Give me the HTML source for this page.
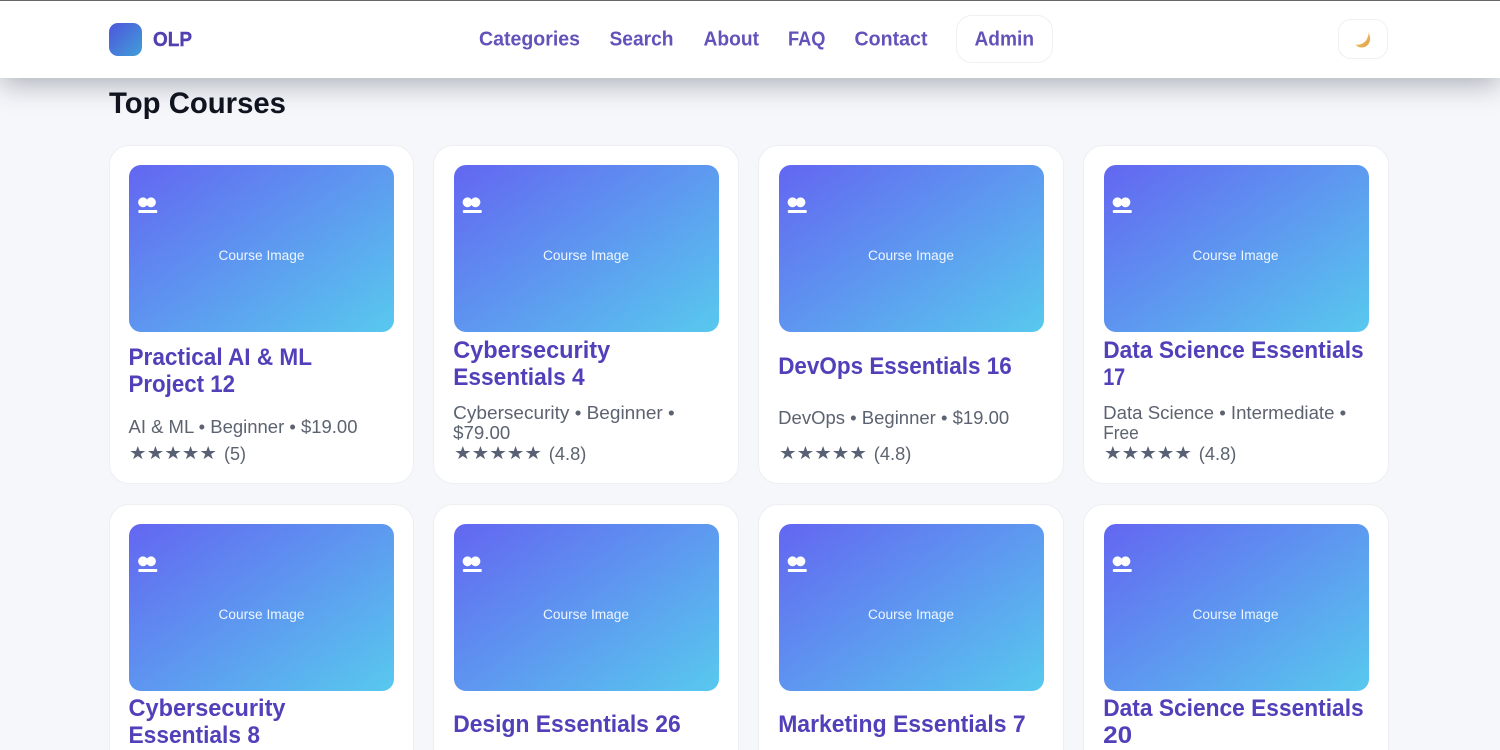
<!DOCTYPE html>
<html lang="en"><head><meta charset="utf-8"><title>OLP</title>
<style>
html,body{margin:0;padding:0;width:1500px;height:750px;overflow:hidden;background:#f5f7fb;font-family:"Liberation Sans",sans-serif}
#w{position:relative;width:1500px;height:750px;overflow:hidden;background:#f5f7fb}
.card{position:absolute;width:306px;height:339px;background:#fff;border:1px solid #edeff3;border-radius:20px;box-sizing:border-box}
.img{position:absolute;width:265px;height:167px;border-radius:12px;background:linear-gradient(145deg,#6366f1,#58c9ee)}
.hd{position:absolute;left:0;top:0;width:1500px;height:78px;background:#fff;border-top:1px solid #666;box-sizing:border-box;box-shadow:0 6px 28px rgba(40,44,60,.36)}
.logo{position:absolute;left:109px;top:23px;width:33px;height:33px;border-radius:9px;background:linear-gradient(135deg,#4f55dc,#3f9fd8)}
.btn{position:absolute;background:#fff;border:1px solid #eff0f4;box-sizing:border-box}
svg{position:absolute;left:0;top:0}
text{font-family:"Liberation Sans",sans-serif}
.t{font-size:24px;font-weight:700;fill:#5140b9}
.m{font-size:18px;fill:#5c6370}
.s{font-size:18px;fill:#586074;font-family:"DejaVu Sans",sans-serif}
.n{font-size:20px;font-weight:700;fill:#6252ba}
.c{font-size:13.500px;fill:#eef6ff}
</style></head><body><div id="w">
<div class="card" style="left:109px;top:145px;width:305px"></div>
<div class="card" style="left:433px;top:145px"></div>
<div class="card" style="left:758px;top:145px"></div>
<div class="card" style="left:1083px;top:145px"></div>
<div class="card" style="left:109px;top:504px;width:305px"></div>
<div class="card" style="left:433px;top:504px"></div>
<div class="card" style="left:758px;top:504px"></div>
<div class="card" style="left:1083px;top:504px"></div>
<div class="img" style="left:129px;top:165px"></div>
<div class="img" style="left:453.500px;top:165px"></div>
<div class="img" style="left:778.500px;top:165px"></div>
<div class="img" style="left:1103.500px;top:165px"></div>
<div class="img" style="left:129px;top:524px"></div>
<div class="img" style="left:453.500px;top:524px"></div>
<div class="img" style="left:778.500px;top:524px"></div>
<div class="img" style="left:1103.500px;top:524px"></div>
<div class="hd"></div>
<div class="logo"></div>
<div class="btn" style="left:956px;top:15px;width:97px;height:48px;border-radius:16px"></div>
<div class="btn" style="left:1338px;top:19px;width:50px;height:40px;border-radius:13px"></div>
<svg width="1500" height="750" viewBox="0 0 1500 750">
<defs><g id="ic" fill="#fff"><circle cx="5" cy="5.300" r="4.900"/><circle cx="13" cy="5.300" r="4.900"/><rect x="0.300" y="13" width="19" height="3" rx="1"/></g>
<linearGradient id="mo" x1="0" y1="0" x2="1" y2="1"><stop offset="0" stop-color="#f6d878"/><stop offset="1" stop-color="#dd9a44"/></linearGradient></defs>
<text x="153" y="46" font-size="20" font-weight="700" fill="#5140b0" stroke="#5140b0" stroke-width=".4" textLength="39" lengthAdjust="spacingAndGlyphs">OLP</text>
<text class="n" x="479" y="45.500" textLength="101" lengthAdjust="spacingAndGlyphs">Categories</text>
<text class="n" x="609.500" y="45.500" textLength="64" lengthAdjust="spacingAndGlyphs">Search</text>
<text class="n" x="703.500" y="45.500" textLength="55.500" lengthAdjust="spacingAndGlyphs">About</text>
<text class="n" x="788" y="45.500" textLength="37.500" lengthAdjust="spacingAndGlyphs">FAQ</text>
<text class="n" x="854.500" y="45.500" textLength="73" lengthAdjust="spacingAndGlyphs">Contact</text>
<text class="n" x="974.500" y="45.500" textLength="59.500" lengthAdjust="spacingAndGlyphs">Admin</text>
<path d="M1368.500 33 C1372 38 1370 47 1362 47.500 C1359 47.500 1357 46.500 1355.500 44.500 C1361 45.500 1368 42 1368.500 33Z" fill="url(#mo)"/>
<text x="109" y="113" font-size="30" font-weight="700" fill="#10141f" textLength="177" lengthAdjust="spacingAndGlyphs">Top Courses</text>

<use href="#ic" x="138" y="197"/><use href="#ic" x="462.500" y="197"/><use href="#ic" x="787.500" y="197"/><use href="#ic" x="1112.500" y="197"/>
<use href="#ic" x="138" y="556"/><use href="#ic" x="462.500" y="556"/><use href="#ic" x="787.500" y="556"/><use href="#ic" x="1112.500" y="556"/>

<text class="c" x="218.500" y="260" textLength="86" lengthAdjust="spacingAndGlyphs">Course Image</text>
<text class="c" x="543" y="260" textLength="86" lengthAdjust="spacingAndGlyphs">Course Image</text>
<text class="c" x="868" y="260" textLength="86" lengthAdjust="spacingAndGlyphs">Course Image</text>
<text class="c" x="1192.500" y="260" textLength="86" lengthAdjust="spacingAndGlyphs">Course Image</text>
<text class="c" x="218.500" y="619" textLength="86" lengthAdjust="spacingAndGlyphs">Course Image</text>
<text class="c" x="543" y="619" textLength="86" lengthAdjust="spacingAndGlyphs">Course Image</text>
<text class="c" x="868" y="619" textLength="86" lengthAdjust="spacingAndGlyphs">Course Image</text>
<text class="c" x="1192.500" y="619" textLength="86" lengthAdjust="spacingAndGlyphs">Course Image</text>

<text class="t" x="128.500" y="365" textLength="183.500" lengthAdjust="spacingAndGlyphs">Practical AI &amp; ML</text>
<text class="t" x="128.500" y="392" textLength="106.500" lengthAdjust="spacingAndGlyphs">Project 12</text>
<text class="m" x="128.500" y="433" textLength="229" lengthAdjust="spacingAndGlyphs">AI &amp; ML • Beginner • $19.00</text>
<text class="s" x="129" y="459" textLength="88" lengthAdjust="spacingAndGlyphs">★★★★★</text>
<text class="m" x="224" y="460" textLength="22" lengthAdjust="spacingAndGlyphs">(5)</text>

<text class="t" x="453.200" y="358" textLength="157" lengthAdjust="spacingAndGlyphs">Cybersecurity</text>
<text class="t" x="453.200" y="385" textLength="131.500" lengthAdjust="spacingAndGlyphs">Essentials 4</text>
<text class="m" x="453.200" y="419" textLength="221.500" lengthAdjust="spacingAndGlyphs">Cybersecurity • Beginner •</text>
<text class="m" x="453.200" y="439" textLength="57" lengthAdjust="spacingAndGlyphs">$79.00</text>
<text class="s" x="454" y="459" textLength="88" lengthAdjust="spacingAndGlyphs">★★★★★</text>
<text class="m" x="548.800" y="460" textLength="37.500" lengthAdjust="spacingAndGlyphs">(4.8)</text>

<text class="t" x="778.200" y="374" textLength="233.500" lengthAdjust="spacingAndGlyphs">DevOps Essentials 16</text>
<text class="m" x="778.200" y="424" textLength="231" lengthAdjust="spacingAndGlyphs">DevOps • Beginner • $19.00</text>
<text class="s" x="779" y="459" textLength="88" lengthAdjust="spacingAndGlyphs">★★★★★</text>
<text class="m" x="873.800" y="460" textLength="37.500" lengthAdjust="spacingAndGlyphs">(4.8)</text>

<text class="t" x="1103.200" y="358" textLength="260.500" lengthAdjust="spacingAndGlyphs">Data Science Essentials</text>
<text class="t" x="1103.200" y="385" textLength="22" lengthAdjust="spacingAndGlyphs">17</text>
<text class="m" x="1103.200" y="419" textLength="243" lengthAdjust="spacingAndGlyphs">Data Science • Intermediate •</text>
<text class="m" x="1103.200" y="439" textLength="35.500" lengthAdjust="spacingAndGlyphs">Free</text>
<text class="s" x="1104" y="459" textLength="88" lengthAdjust="spacingAndGlyphs">★★★★★</text>
<text class="m" x="1198.800" y="460" textLength="37.500" lengthAdjust="spacingAndGlyphs">(4.8)</text>

<text class="t" x="128.500" y="716" textLength="157" lengthAdjust="spacingAndGlyphs">Cybersecurity</text>
<text class="t" x="128.500" y="743" textLength="131.500" lengthAdjust="spacingAndGlyphs">Essentials 8</text>
<text class="t" x="453.200" y="732" textLength="227.500" lengthAdjust="spacingAndGlyphs">Design Essentials 26</text>
<text class="t" x="778.200" y="732" textLength="247.500" lengthAdjust="spacingAndGlyphs">Marketing Essentials 7</text>
<text class="t" x="1103.200" y="716" textLength="260.500" lengthAdjust="spacingAndGlyphs">Data Science Essentials</text>
<text class="t" x="1103.200" y="743" textLength="29" lengthAdjust="spacingAndGlyphs">20</text>
</svg>
</div></body></html>
